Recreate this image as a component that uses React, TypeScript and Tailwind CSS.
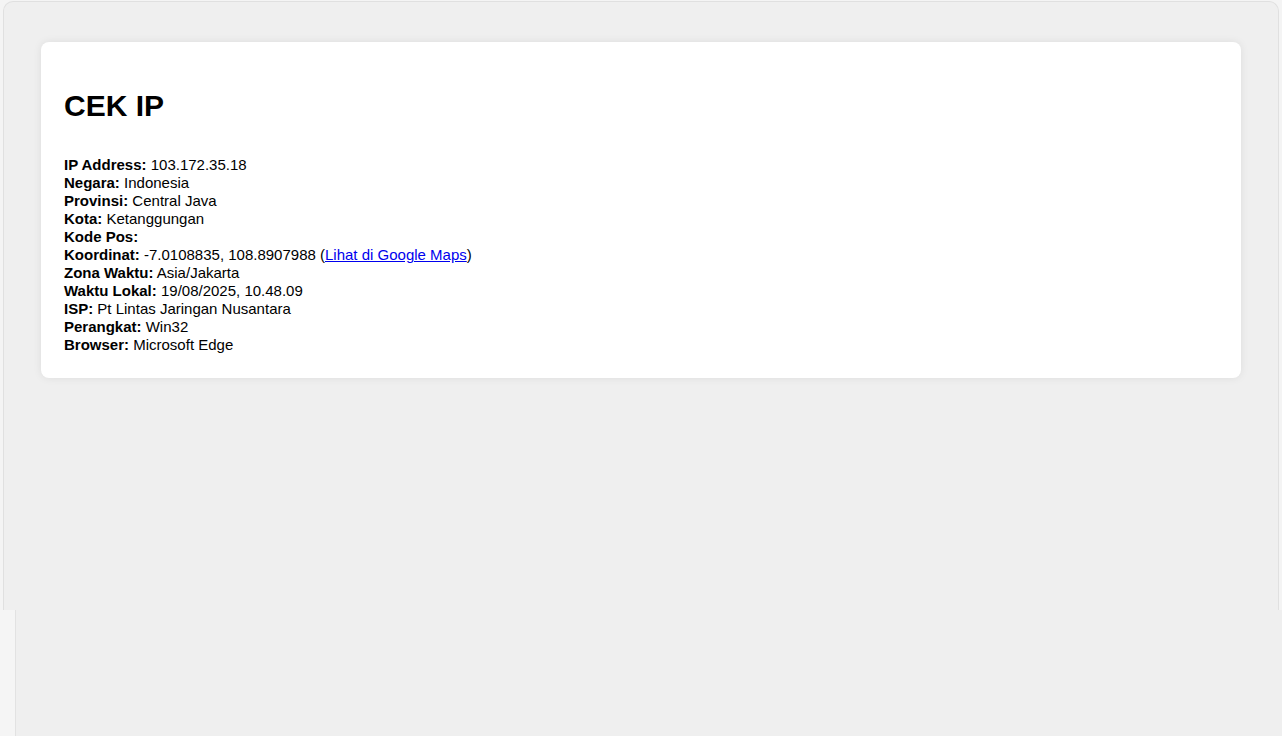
import React from 'react';

const rows: { label: string; value: string; link?: boolean }[] = [
  { label: 'IP Address:', value: '103.172.35.18' },
  { label: 'Negara:', value: 'Indonesia' },
  { label: 'Provinsi:', value: 'Central Java' },
  { label: 'Kota:', value: 'Ketanggungan' },
  { label: 'Kode Pos:', value: '' },
  { label: 'Koordinat:', value: '-7.0108835, 108.8907988', link: true },
  { label: 'Zona Waktu:', value: 'Asia/Jakarta' },
  { label: 'Waktu Lokal:', value: '19/08/2025, 10.48.09' },
  { label: 'ISP:', value: 'Pt Lintas Jaringan Nusantara' },
  { label: 'Perangkat:', value: 'Win32' },
  { label: 'Browser:', value: 'Microsoft Edge' },
];

const App: React.FC = () => {
  return (
    <div
      className="h-[736px] w-full overflow-hidden bg-[#f4f4f4] text-black"
      style={{ fontFamily: '"Liberation Sans", Arial, sans-serif' }}
    >
      <div className="mx-[3px] mt-[1px] h-[609px] rounded-t-[10px] border border-b-0 border-[#e0e0e0] bg-[#efefef] px-[37px] pt-[40px]">
        <div className="rounded-lg bg-white px-[23px] pt-[24px] pb-[24px] shadow-[0_0_8px_rgba(0,0,0,0.08)]">
          <h1 className="mt-[21px] mb-[32px] text-[30px] leading-[37px] font-bold">CEK IP</h1>
          <div className="text-[15px] leading-[18px]">
            {rows.map((r) => (
              <div key={r.label}>
                <strong className="font-bold">{r.label}</strong> {r.value}
                {r.link && (
                  <>
                    {' ('}
                    <a href="#" className="text-[#0000ee] underline">
                      Lihat di Google Maps
                    </a>
                    {')'}
                  </>
                )}
              </div>
            ))}
          </div>
        </div>
      </div>
      <div className="flex h-[126px]">
        <div className="w-[16px] border-r border-[#e2e2e2] bg-[#f5f5f5]" />
        <div className="flex-1 bg-[#efefef]" />
      </div>
    </div>
  );
};

export default App;
